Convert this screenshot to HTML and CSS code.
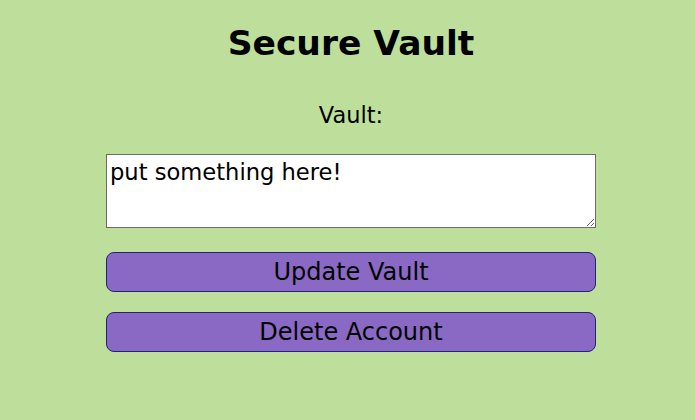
FILE: index.html
```html
<!DOCTYPE html>
<html>
<head>
<meta charset="utf-8">
<link rel="stylesheet" href="styles.css">
</head>
<body>
<main class="vault">
  <h1 class="title">Secure Vault</h1>
  <label class="label" for="v">Vault:</label>
  <textarea id="v" class="box">put something here!</textarea>
  <button class="btn">Update Vault</button>
  <button class="btn">Delete Account</button>
</main>
</body>
</html>
```
FILE: styles.css
```css
html, body { margin: 0; padding: 0; background: #bddf9b; }
body { font-family: "DejaVu Sans", sans-serif; color: #000; }
.vault {
  width: 490px;
  margin-left: 106px;
  display: flex;
  flex-direction: column;
  align-items: stretch;
}
.title {
  margin: 18px 0 0;
  text-align: center;
  font-size: 34.5px;
  line-height: 50px;
  font-weight: 700;
}
.label {
  margin-top: 32px;
  text-align: center;
  font-size: 22.5px;
  line-height: 30px;
}
.box {
  box-sizing: border-box;
  margin-top: 24px;
  height: 74px;
  padding: 3px 3px;
  border: 1px solid #6b6b6b;
  background: #fff;
  font-family: "DejaVu Sans", sans-serif;
  font-size: 22.6px;
  line-height: 28px;
  resize: vertical;
}
.btn {
  box-sizing: border-box;
  margin-top: 24px;
  height: 40px;
  border: 1px solid #25207a;
  border-radius: 8px;
  background: #8a69c4;
  font-family: "DejaVu Sans", sans-serif;
  font-size: 24px;
  color: #000;
  padding: 0;
}
.btn + .btn { margin-top: 20px; }
```
